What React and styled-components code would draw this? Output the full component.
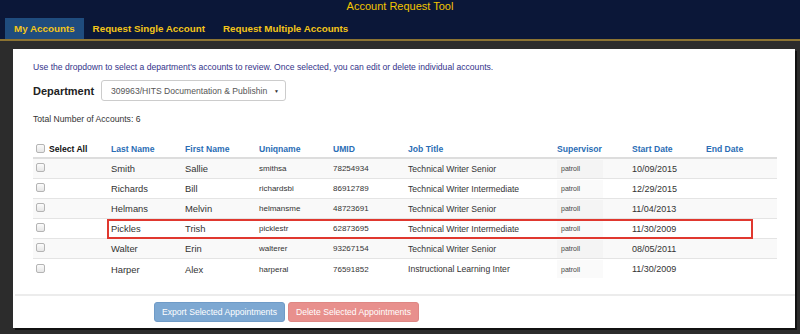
import React from 'react';
import styled, { createGlobalStyle, css } from 'styled-components';

const GlobalStyle = createGlobalStyle`
  body {
    margin: 0;
    background: #2c2c2c;
    font-family: "Liberation Sans", Arial, sans-serif;
  }
`;

const Header = styled.header`
  background: #0b1738;
  height: 39px;
  border-bottom: 2px solid #8c7332;
  display: flex;
  flex-direction: column;
`;

const AppTitle = styled.h1`
  margin: 0;
  height: 18px;
  font-size: 11px;
  line-height: 13px;
  font-weight: normal;
  color: #f2c500;
  text-align: center;
`;

const Tabs = styled.nav`
  display: flex;
  padding-left: 5px;
  height: 21px;
`;

const Tab = styled.a`
  ${({ active }) => css`
    display: flex;
    align-items: center;
    padding: 0 9px;
    font-size: 9.8px;
    font-weight: bold;
    color: #f4c518;
    background: ${active ? '#1f4c7e' : 'transparent'};
    cursor: pointer;
  `}
`;

const Page = styled.main`
  padding: 8px 5px 6px 13px;
`;

const Panel = styled.section`
  background: #fff;
  height: 279px;
  box-sizing: border-box;
  box-shadow: 2px 2px 0 #111;
  padding: 12px 18px 0 20px;
  display: flex;
  flex-direction: column;
`;

const Intro = styled.p`
  margin: 0;
  font-size: 8.6px;
  line-height: 12px;
  color: #33338a;
`;

const DeptRow = styled.div`
  display: flex;
  align-items: center;
  gap: 8px;
  margin-top: 7px;
`;

const DeptLabel = styled.label`
  font-size: 11px;
  font-weight: bold;
  color: #222;
  width: 60px;
`;

const Select = styled.div`
  width: 185px;
  height: 21px;
  box-sizing: border-box;
  border: 1px solid #ccc;
  border-radius: 3px;
  display: flex;
  align-items: center;
  justify-content: space-between;
  padding: 0 6px 0 9px;
  font-size: 8.6px;
  color: #555;
`;

const Caret = styled.span`
  font-size: 5px;
  color: #333;
`;

const Total = styled.div`
  margin-top: 13px;
  font-size: 8.6px;
  color: #333;
`;

const Table = styled.div`
  margin-top: 16px;
  width: 744px;
`;

const Row = styled.div`
  ${({ striped, head, highlight }) => css`
    position: relative;
    display: grid;
    grid-template-columns: 74px 74px 74px 74px 75px 149px 75px 74px 75px;
    height: ${head ? '19px' : '20px'};
    align-items: center;
    background: ${striped ? '#f9f9f9' : '#fff'};
    border-bottom: ${head ? '2px solid #ddd' : '1px solid #e4e4e4'};
    box-sizing: border-box;
    &:last-child {
      border-bottom: none;
    }
    ${highlight && css`
      &::after {
        content: '';
        position: absolute;
        left: 74px;
        width: 646px;
        top: 0;
        bottom: -1px;
        border: 2px solid #e0382f;
        box-sizing: border-box;
        pointer-events: none;
      }
    `}
  `}
`;

const HeadCell = styled.div`
  padding-left: 4px;
  font-size: 8.6px;
  font-weight: bold;
  color: #2a6db5;
  white-space: nowrap;
`;

const SelectAll = styled.div`
  display: flex;
  align-items: center;
  gap: 4px;
  padding-left: 3px;
  font-size: 8.6px;
  font-weight: bold;
  color: #111;
`;

const Check = styled.span`
  display: inline-block;
  width: 7px;
  height: 7px;
  border: 1px solid #b4b4b4;
  border-radius: 2px;
  background: linear-gradient(#fbfbfb, #e6e6e6);
`;

const CheckCell = styled.div`
  padding-left: 3px;
  display: flex;
  align-items: center;
  margin-top: -2px;
`;

const Cell = styled.div`
  ${({ size }) => css`
    padding-left: 4px;
    font-size: ${size}px;
    color: #333;
    white-space: nowrap;
    overflow: hidden;
  `}
`;

const SupervisorBox = styled.span`
  display: flex;
  align-items: center;
  width: 42px;
  height: 18px;
  padding-left: 4px;
  background: rgba(0, 0, 0, 0.018);
  font-size: 7px;
  color: #444;
`;

const Footer = styled.footer`
  margin: 15px -18px 0 -18px;
  border-top: 2px solid #ececec;
  padding: 6px 0 0 139px;
  display: flex;
  gap: 3px;
`;

const Button = styled.button`
  ${({ danger }) => css`
    height: 20px;
    width: 131px;
    border-radius: 3px;
    border: 1px solid ${danger ? '#de8784' : '#6f9bc7'};
    background: ${danger ? '#e8908d' : '#7da8d2'};
    color: #fff;
    font-family: inherit;
    font-size: 8.6px;
    padding: 0;
  `}
`;

const accounts = [
  ['Smith', 'Sallie', 'smithsa', '78254934', 'Technical Writer Senior', '10/09/2015'],
  ['Richards', 'Bill', 'richardsbi', '86912789', 'Technical Writer Intermediate', '12/29/2015'],
  ['Helmans', 'Melvin', 'helmansme', '48723691', 'Technical Writer Senior', '11/04/2013'],
  ['Pickles', 'Trish', 'picklestr', '62873695', 'Technical Writer Intermediate', '11/30/2009'],
  ['Walter', 'Erin', 'walterer', '93267154', 'Technical Writer Senior', '08/05/2011'],
  ['Harper', 'Alex', 'harperal', '76591852', 'Instructional Learning Inter', '11/30/2009'],
];

const App = () => (
  <>
    <GlobalStyle />
    <Header>
      <AppTitle>Account Request Tool</AppTitle>
      <Tabs>
        <Tab active>My Accounts</Tab>
        <Tab>Request Single Account</Tab>
        <Tab>Request Multiple Accounts</Tab>
      </Tabs>
    </Header>
    <Page>
      <Panel>
        <Intro>
          Use the dropdown to select a department's accounts to review. Once selected, you can edit or delete individual accounts.
        </Intro>
        <DeptRow>
          <DeptLabel>Department</DeptLabel>
          <Select>
            309963/HITS Documentation &amp; Publishin
            <Caret>▼</Caret>
          </Select>
        </DeptRow>
        <Total>Total Number of Accounts: 6</Total>
        <Table>
          <Row head>
            <SelectAll><Check />Select All</SelectAll>
            <HeadCell>Last Name</HeadCell>
            <HeadCell>First Name</HeadCell>
            <HeadCell>Uniqname</HeadCell>
            <HeadCell>UMID</HeadCell>
            <HeadCell>Job Title</HeadCell>
            <HeadCell>Supervisor</HeadCell>
            <HeadCell>Start Date</HeadCell>
            <HeadCell>End Date</HeadCell>
          </Row>
          {accounts.map(([last, first, uniq, umid, job, start], i) => (
            <Row key={uniq} striped={i % 2 === 0} highlight={uniq === 'picklestr'}>
              <CheckCell><Check /></CheckCell>
              <Cell size={9.4}>{last}</Cell>
              <Cell size={9.4}>{first}</Cell>
              <Cell size={8}>{uniq}</Cell>
              <Cell size={8}>{umid}</Cell>
              <Cell size={8.6}>{job}</Cell>
              <Cell size={7}><SupervisorBox>patroll</SupervisorBox></Cell>
              <Cell size={9}>{start}</Cell>
              <Cell size={9}></Cell>
            </Row>
          ))}
        </Table>
        <Footer>
          <Button>Export Selected Appointments</Button>
          <Button danger>Delete Selected Appointments</Button>
        </Footer>
      </Panel>
    </Page>
  </>
);

export default App;
